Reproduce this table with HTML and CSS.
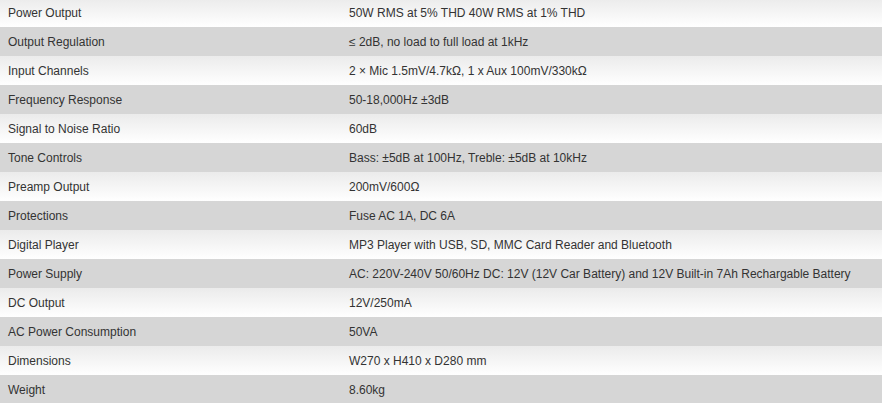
FILE: index.html
```html
<!DOCTYPE html>
<html>
<head>
<meta charset="utf-8">
<link rel="stylesheet" href="styles.css">
</head>
<body>
<table class="specs">
<tr class="odd"><td class="k">Power Output</td><td class="v">50W RMS at 5% THD 40W RMS at 1% THD</td></tr>
<tr class="even"><td class="k">Output Regulation</td><td class="v">≤ 2dB, no load to full load at 1kHz</td></tr>
<tr class="odd"><td class="k">Input Channels</td><td class="v">2 × Mic 1.5mV/4.7kΩ, 1 x Aux 100mV/330kΩ</td></tr>
<tr class="even"><td class="k">Frequency Response</td><td class="v">50-18,000Hz ±3dB</td></tr>
<tr class="odd"><td class="k">Signal to Noise Ratio</td><td class="v">60dB</td></tr>
<tr class="even"><td class="k">Tone Controls</td><td class="v">Bass: ±5dB at 100Hz, Treble: ±5dB at 10kHz</td></tr>
<tr class="odd"><td class="k">Preamp Output</td><td class="v">200mV/600Ω</td></tr>
<tr class="even"><td class="k">Protections</td><td class="v">Fuse AC 1A, DC 6A</td></tr>
<tr class="odd"><td class="k">Digital Player</td><td class="v">MP3 Player with USB, SD, MMC Card Reader and Bluetooth</td></tr>
<tr class="even"><td class="k">Power Supply</td><td class="v">AC: 220V-240V 50/60Hz DC: 12V (12V Car Battery) and 12V Built-in 7Ah Rechargable Battery</td></tr>
<tr class="odd"><td class="k">DC Output</td><td class="v">12V/250mA</td></tr>
<tr class="even"><td class="k">AC Power Consumption</td><td class="v">50VA</td></tr>
<tr class="odd"><td class="k">Dimensions</td><td class="v">W270 x H410 x D280 mm</td></tr>
<tr class="even"><td class="k">Weight</td><td class="v">8.60kg</td></tr>
</table>
</body>
</html>
```

FILE: styles.css
```css
html, body {
  margin: 0;
  padding: 0;
  background: #fff;
  overflow: hidden;
}
.specs {
  width: 882px;
  border-collapse: collapse;
  margin-top: -2px;
  font-family: "Liberation Sans", Arial, sans-serif;
  font-size: 12px;
  color: #333;
}
.specs td {
  height: 29px;
  padding: 0 8px;
  box-sizing: border-box;
  vertical-align: middle;
  line-height: 14px;
}
.specs .k {
  width: 341px;
}
.specs tr.odd {
  background: linear-gradient(to bottom, #ebebeb, #ffffff);
}
.specs tr.even {
  background: #d6d6d6;
}
```
